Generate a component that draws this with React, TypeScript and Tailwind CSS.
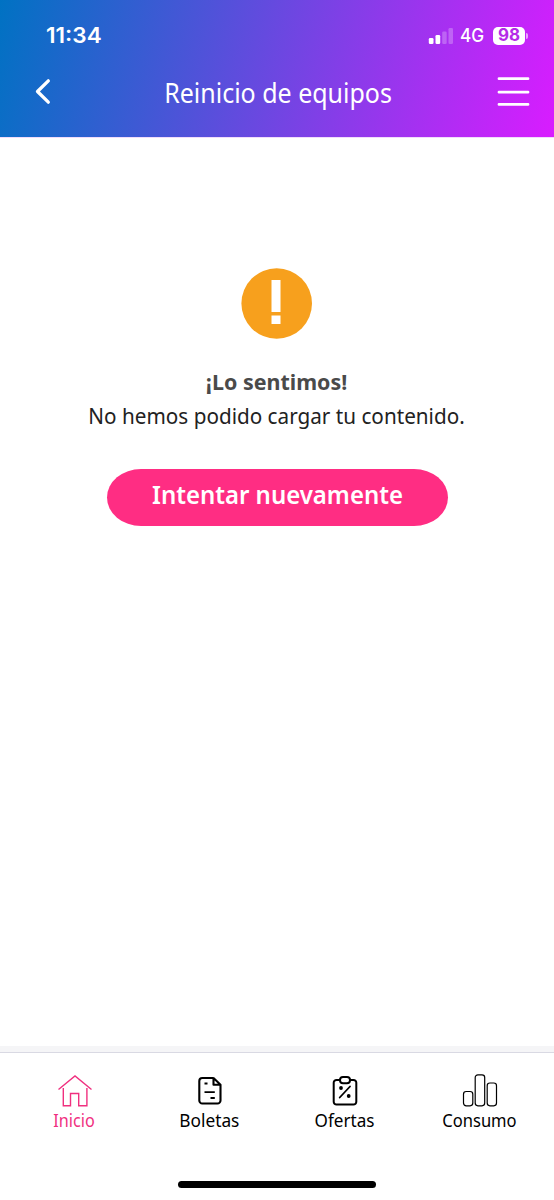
import type { ReactNode } from 'react';

const HomeIcon = () => (
  <svg width="36" height="36" viewBox="0 0 36 36" fill="none" stroke="currentColor" strokeWidth="1.4" className="block">
    <path d="M1.5 15.5 18 2l16.5 13.5" />
    <path d="M6.3 14v17.7h7.2V19.5h8.2v12.2h8.2V14" />
  </svg>
);

const BillIcon = () => (
  <svg width="36" height="36" viewBox="0 0 36 36" fill="none" stroke="currentColor" strokeWidth="2.1" strokeLinejoin="round" className="block">
    <path d="M21.5 4H10.3a3 3 0 0 0-3 3v19.5a3 3 0 0 0 3 3h15.2a3 3 0 0 0 3-3V10.8L21.5 4v6.8h7" />
    <path d="M12.5 9.5h3M12.5 18.2h10.3M18.5 24h4.3" strokeWidth="1.8" />
  </svg>
);

const OffersIcon = () => (
  <svg width="36" height="36" viewBox="0 0 36 36" fill="none" stroke="currentColor" strokeWidth="2" className="block">
    <path d="M13 6H9.5A2.8 2.8 0 0 0 6.7 8.8v19a2.8 2.8 0 0 0 2.8 2.8h17a2.8 2.8 0 0 0 2.8-2.8v-19A2.8 2.8 0 0 0 26.5 6H23" />
    <rect x="13" y="3" width="10" height="6.3" rx="3" />
    <path d="m12.7 23.5 10.3-11" strokeLinecap="round" strokeWidth="1.8" />
    <circle cx="14" cy="14" r="1.9" fill="currentColor" stroke="none" />
    <circle cx="21.7" cy="22" r="1.9" fill="currentColor" stroke="none" />
  </svg>
);

const UsageIcon = () => (
  <svg width="36" height="36" viewBox="0 0 36 36" fill="none" stroke="currentColor" strokeWidth="1.2" className="block">
    <rect x="1.5" y="17.5" width="9.3" height="14.3" rx="2.7" />
    <rect x="13.2" y="0.8" width="9.5" height="31" rx="2.7" />
    <rect x="25.2" y="9" width="9.3" height="22.8" rx="2.7" />
  </svg>
);

function Tab({ icon, label, className }: { icon: ReactNode; label: ReactNode; className?: string }) {
  return (
    <button className={`flex w-[135px] flex-col items-center pt-[21px] ${className || 'text-black'}`}>
      {icon}
      <span className="text-[18px] leading-[20px] whitespace-nowrap">{label}</span>
    </button>
  );
}

export default function App() {
  return (
    <div className="flex h-[1200px] w-[554px] flex-col overflow-hidden bg-white font-['Noto_Sans',sans-serif]">
      <header className="h-[137px] shrink-0 bg-[linear-gradient(104deg,#0072c3_0%,#d91cff_100%)] text-white">
        <div className="flex h-[71px] items-center pr-[26px] pl-[46px]">
          <span className="origin-left scale-x-105 font-['Inter',sans-serif] text-[21.5px] leading-none font-semibold">11:34</span>
          <div className="ml-auto flex items-center">
            <svg width="25" height="18" viewBox="0 0 25 18" fill="white" className="mr-[7px]">
              <rect x="0.8" y="11" width="4.7" height="6" rx="1.3" />
              <rect x="7.5" y="8" width="4.7" height="9" rx="1.3" />
              <rect x="14.2" y="4.5" width="4.5" height="12.5" rx="1.3" opacity=".25" />
              <rect x="20.5" y="1" width="4.5" height="16" rx="1.3" opacity=".25" />
            </svg>
            <span className="mr-[7px] font-['Inter',sans-serif] text-[18.5px] leading-none font-medium">
              <span className="inline-block origin-left scale-x-93">4G</span>
            </span>
            <span className="flex h-[18px] w-[32px] items-center justify-center rounded-[5px] bg-white font-['Inter',sans-serif] text-[17px] leading-none font-bold text-[#b52be8]">98</span>
            <span className="ml-px h-[6px] w-[2px] rounded-r bg-white/60" />
          </div>
        </div>
        <div className="flex h-[42px] items-center justify-between pr-[24px] pl-[35px]">
          <svg width="24" height="28" viewBox="0 0 24 28" fill="none" stroke="white" strokeWidth="3.3" strokeLinecap="round" strokeLinejoin="round">
            <path d="M13.3 2.8 2.5 13.5l10.8 10.7" />
          </svg>
          <h1 className="origin-center scale-x-[.925] text-[27px] leading-none whitespace-nowrap">Reinicio de equipos</h1>
          <svg width="33" height="30" viewBox="0 0 33 30" stroke="white" strokeWidth="2.8" strokeLinecap="round">
            <path d="M2 1.7h29M2 15.2h29M2 27.4h29" />
          </svg>
        </div>
      </header>

      <main className="flex flex-1 flex-col items-center border-t border-[#f0dcfa] pt-[130px]">
        <svg width="72" height="71" viewBox="0 0 72 71">
          <circle cx="35.7" cy="35.5" r="35.3" fill="#f7a01d" />
          <path d="M30.5 12h9v32h-9zM30.5 47.5h9V56h-9z" fill="white" />
        </svg>
        <h2 className="mt-[26px] scale-x-[.975] text-[22px] leading-[33px] font-bold whitespace-nowrap text-[#4a4a4a]">¡Lo sentimos!</h2>
        <p className="mt-px scale-x-[.92] text-[22.5px] leading-[33px] whitespace-nowrap text-[#222]">No hemos podido cargar tu contenido.</p>
        <button className="mt-[37px] flex h-[57px] w-[341px] items-center justify-center rounded-[34px/28.5px] bg-[#ff2d83] pb-[5px] text-white">
          <span className="scale-x-94 text-[25.5px] leading-none font-semibold whitespace-nowrap">Intentar nuevamente</span>
        </button>
      </main>

      <div className="h-[6px] bg-[#f5f5f7]" />
      <nav className="flex h-[148px] flex-col border-t border-[#d9d9e3] px-[7px]">
        <div className="flex">
          <Tab icon={<HomeIcon />} label={<span className="inline-block scale-x-90">Inicio</span>} className="text-[#f0307f]" />
          <Tab icon={<BillIcon />} label={<span className="inline-block scale-x-96">Boletas</span>} />
          <Tab icon={<OffersIcon />} label={<span className="inline-block scale-x-95">Ofertas</span>} />
          <Tab icon={<UsageIcon />} label={<span className="inline-block scale-x-92">Consumo</span>} />
        </div>
        <div className="mt-auto mb-[12px] h-[7px] w-[198px] self-center rounded-full bg-black" />
      </nav>
    </div>
  );
}
